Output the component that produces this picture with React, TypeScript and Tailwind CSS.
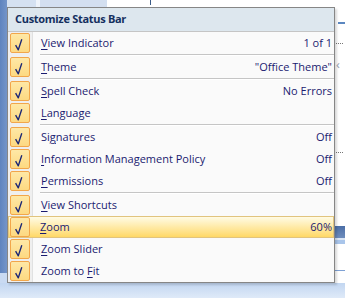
import React from "react";

type Item = {
    pre: string;
    key: string;
    post: string;
    value?: string;
    sepAfter?: boolean;
    active?: boolean;
};

const items: Item[] = [
    { pre: "", key: "V", post: "iew Indicator", value: "1 of 1", sepAfter: true },
    { pre: "", key: "T", post: "heme", value: "\"Office Theme\"", sepAfter: true },
    { pre: "", key: "S", post: "pell Check", value: "No Errors" },
    { pre: "", key: "L", post: "anguage", sepAfter: true },
    { pre: "Si", key: "g", post: "natures", value: "Off" },
    { pre: "", key: "I", post: "nformation Management Policy", value: "Off" },
    { pre: "", key: "P", post: "ermissions", value: "Off", sepAfter: true },
    { pre: "", key: "V", post: "iew Shortcuts" },
    { pre: "", key: "Z", post: "oom", value: "60%", active: true },
    { pre: "", key: "Z", post: "oom Slider" },
    { pre: "Zoom to ", key: "F", post: "it" },
];

function CheckBox() {
    return (
        <div className="w-[20px] h-[20px] rounded-[2px] border border-[#f2a64a] bg-gradient-to-b from-[#fee8a6] to-[#fdd981]">
            <svg width="18" height="18" viewBox="0 0 18 18" fill="none">
                <path d="M4.6 11.2 L7.3 15.8 L10.8 5.2" stroke="#1a2675" strokeWidth="1.35" strokeLinejoin="round" />
            </svg>
        </div>
    );
}

function Row({ item }: { item: Item }) {
    return (
        <div
            className={`flex h-[22px] items-center ${item.active
                ? "border border-[#e1c47e] bg-gradient-to-b from-[#fffbe4] via-[#ffeaa6] to-[#ffd865]"
                : ""
                }`}
        >
            <div
                className={`flex items-center h-full ${item.active
                    ? "w-[24px] pl-[1px]"
                    : "w-[25px] pl-[2px] bg-[#efefef] border-r border-[#e0e1e1]"
                    }`}
            >
                <CheckBox />
            </div>
            <div className={`flex flex-1 items-center justify-between h-full ${item.active ? "pl-[7px] pr-[1px]" : "pl-[8px] pr-[2px]"}`}>
                <span>
                    {item.pre}
                    <span className="underline decoration-1 underline-offset-[2px]">{item.key}</span>
                    {item.post}
                </span>
                {item.value && <span>{item.value}</span>}
            </div>
        </div>
    );
}

function Separator() {
    return (
        <div className="flex h-[2px]">
            <div className="w-[25px] bg-[#efefef] border-r border-[#e0e1e1]" />
            <div className="flex-1 pl-[7px]">
                <div className="h-px bg-[#c5c5c5]" />
                <div className="h-px bg-white" />
            </div>
        </div>
    );
}

export default function App() {
    return (
        <div className="relative w-[345px] h-[298px] overflow-hidden bg-white font-['Open_Sans',sans-serif]">
            {/* window behind the popup */}
            <div className="flex flex-col h-full">
                <div className="flex h-[283px]">
                    <div className="w-[7px] flex flex-col">
                        <div className="h-[273px] bg-gradient-to-r from-[#5f84bf] to-[#7495c9]" />
                        <div className="flex-1 bg-[#c9daf2]" />
                    </div>
                    <div className="flex-1 flex flex-col">
                        <div className="h-[7px] flex">
                            <div className="w-[29px] bg-[#d5e1f1]" />
                            <div className="w-[4px] bg-[#eef3fa]" />
                            <div className="w-[67px] bg-[#d3dff0]" />
                            <div className="w-[43px] bg-white" />
                            <div className="w-px h-[5px] bg-[#3b5b86]" />
                            <div className="flex-1 bg-white" />
                        </div>
                    </div>
                    <div className="w-[10px] flex flex-col">
                        <div className="h-[22px]" />
                        <div className="h-[2px] ml-[3px] bg-[#5b87c0]" />
                        <div className="h-[19px]" />
                        <div className="h-px w-[7px] ml-[1px] border-t border-dotted border-[#777]" />
                        <div className="h-[15px]" />
                        <div className="text-[13px] leading-[10px] text-[#9aa4b4] ml-[1px]">‹</div>
                        <div className="h-[83px]" />
                        <div className="h-px w-[7px] ml-[1px] border-t border-dotted border-[#777]" />
                        <div className="h-[73px]" />
                        <div className="h-[12px] bg-gradient-to-b from-[#4b6ea6] to-[#6e8dbd]" />
                        <div className="h-[2px] bg-[#dbe6f5]" />
                        <div className="h-[4px] bg-[#a9c5ea]" />
                        <div className="h-[26px]" />
                        <div className="h-px bg-[#7ea1d4]" />
                    </div>
                </div>
                <div className="flex-1 bg-gradient-to-b from-[#c2d6f1] to-[#dfeaf8]" />
            </div>

            {/* Customize Status Bar popup */}
            <div className="absolute left-[7px] top-[7px] w-[328px] border border-[#868686] bg-[#fafafa] text-[11px] text-[#1b1b70] shadow-[2px_2px_2px_rgba(0,0,0,0.15)]">
                <div className="h-[24px] flex items-center pl-[7px] bg-[#dde7ee] border-b border-[#c5c5c5] font-bold tracking-[-0.3px] text-[#15305f]">
                    Customize Status Bar
                </div>
                {items.map((it, i) => (
                    <React.Fragment key={i}>
                        <Row item={it} />
                        {it.sepAfter && <Separator />}
                    </React.Fragment>
                ))}
            </div>
        </div>
    );
}
